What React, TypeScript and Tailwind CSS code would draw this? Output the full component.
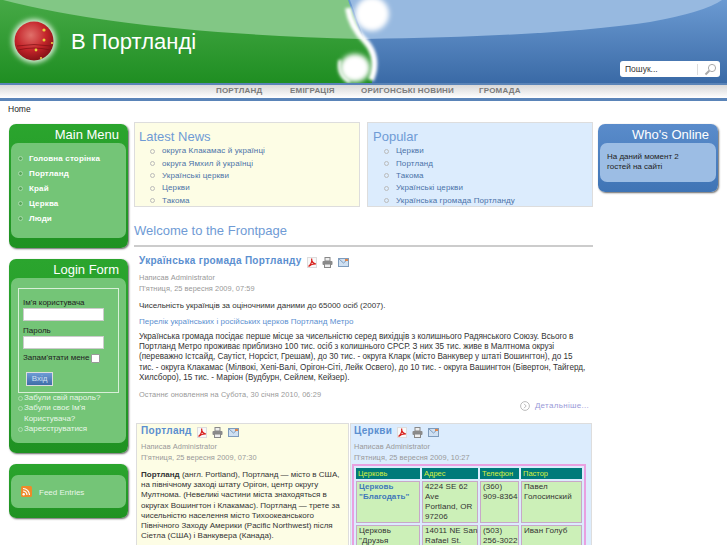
const sans = "font-['Liberation_Sans',Arial,sans-serif]";

const latest = ["округа Клакамас й українці", "округа Ямхил й українці", "Українські церкви", "Церкви", "Такома"];
const popular = ["Церкви", "Портланд", "Такома", "Українські церкви", "Українська громада Портланду"];
const menu = ["Головна сторінка", "Портланд", "Край", "Церква", "Люди"];
const nav = [
  { label: "ПОРТЛАНД", cls: "w-[74px]" },
  { label: "ЕМІГРАЦІЯ", cls: "w-[71px]" },
  { label: "ОРИГОНСЬКІ НОВИНИ", cls: "w-[118px]" },
  { label: "ГРОМАДА", cls: "w-[60px]" },
];

function HeaderArt() {
  return (
    <svg className="absolute inset-0" width="727" height="83" viewBox="0 0 727 83">
      <defs>
        <linearGradient id="g" x1="0" y1="0" x2="0" y2="1">
          <stop offset="0" stopColor="#46a946" />
          <stop offset="1" stopColor="#1f8e22" />
        </linearGradient>
        <linearGradient id="b" x1="0" y1="0" x2="0" y2="1">
          <stop offset="0" stopColor="#6b9ad2" />
          <stop offset="1" stopColor="#3a6aa6" />
        </linearGradient>
        <radialGradient id="ball" cx="0.42" cy="0.35" r="0.7">
          <stop offset="0" stopColor="#e0706a" />
          <stop offset="0.55" stopColor="#c4242a" />
          <stop offset="1" stopColor="#7d0f14" />
        </radialGradient>
        <filter id="soft" x="-40%" y="-40%" width="180%" height="180%">
          <feGaussianBlur stdDeviation="2.6" />
        </filter>
        <filter id="tail" x="-60%" y="-20%" width="220%" height="140%">
          <feGaussianBlur stdDeviation="1.6" />
        </filter>
      </defs>
      <rect width="727" height="83" fill="url(#b)" />
      <path d="M0 0L348 0C350 14 354 26 362 36C372 46 376 60 372 83L0 83Z" fill="url(#g)" />
      <path d="M3 0Q130 33 362 39L348 0Z" fill="#82c785" />
      <path d="M364 39Q560 36 650 22Q705 12 722 0L350 0Z" fill="#97b9e0" />
      <path d="M348 8C350 22 356 32 366 42C375 52 377 66 371 80" fill="none" stroke="#ffffff" strokeWidth="6" filter="url(#tail)" />
      <path d="M340 60C338 70 342 78 350 82" fill="none" stroke="#ffffff" strokeWidth="3" filter="url(#tail)" />
      <ellipse cx="372" cy="14" rx="17" ry="17" fill="#ffffff" filter="url(#soft)" />
      <ellipse cx="355" cy="68" rx="15" ry="14" fill="#ffffff" filter="url(#soft)" />
      <circle cx="34" cy="41" r="22" fill="#d8efd8" filter="url(#soft)" />
      <circle cx="34" cy="41" r="19.5" fill="url(#ball)" />
      <path d="M18 50Q34 46 50 50M17 46Q34 43 51 46" fill="none" stroke="#7d0f14" strokeWidth="1" opacity="0.7" />
      <g fill="#e8d040">
        <circle cx="44" cy="30" r="1.6" />
        <circle cx="44" cy="40" r="1.5" />
        <circle cx="36" cy="50" r="1.4" />
        <circle cx="52" cy="43" r="1.1" />
        <circle cx="41" cy="58" r="1.1" />
      </g>
    </svg>
  );
}

function Bullet({ cls }: { cls: string }) {
  return <span className={`w-[5px] h-[5px] rounded-full shrink-0 border ${cls}`} />;
}

function ArticleIcons() {
  return (
    <span className="inline-flex items-center gap-[5px] ml-[5px] mt-[4px]">
      <svg width="10" height="11" viewBox="0 0 10 11">
        <rect x="0.5" y="0.5" width="9" height="10" fill="#f8f8f8" stroke="#ddd" />
        <path d="M1.5 9.5C4 7.5 5 4 4.6 1.5C4.6 4 6 6.5 9 7C6.5 6.8 4 7.5 1.5 9.5Z" fill="none" stroke="#d8231f" strokeWidth="1.2" />
      </svg>
      <svg width="11" height="11" viewBox="0 0 11 11">
        <rect x="3" y="0.5" width="5" height="3.5" fill="#eee" stroke="#888" />
        <rect x="0.5" y="4" width="10" height="4" rx="1" fill="#8a8a8a" />
        <rect x="2.5" y="7" width="6" height="3.5" fill="#eee" stroke="#888" />
      </svg>
      <svg width="11" height="9" viewBox="0 0 11 9">
        <rect x="0.5" y="0.5" width="10" height="8" fill="#cfe0f2" stroke="#7f9cbc" />
        <path d="M1 1L5.5 5L10 1" fill="none" stroke="#7f9cbc" />
        <rect x="7" y="1" width="3" height="2" fill="#e0864a" />
      </svg>
    </span>
  );
}

function Meta({ date }: { date: string }) {
  return (
    <div className="text-[7.4px] text-[#999] tracking-[0.05px]">
      <div className="h-[11px] leading-[11px]">Написав Administrator</div>
      <div className="h-[11px] leading-[11px]">П'ятниця, 25 вересня 2009, {date}</div>
    </div>
  );
}

function Module({ title, color, inner, height, titleH, children }: { title?: string; color: string; inner: string; height: string; titleH: string; children: React.ReactNode }) {
  return (
    <div className={`rounded-[7px] px-[2px] pt-[2px] pb-[10px] shadow-[1px_1px_2px_#666] bg-gradient-to-b ${color}`}>
      <div className={`${titleH} text-right pr-[7px] text-[13px] leading-[17px] text-white`}>{title}</div>
      <div className={`rounded-[7px] ${inner} ${height}`}>{children}</div>
    </div>
  );
}

function NewsBox({ title, items, bg, pad }: { title: string; items: string[]; bg: string; pad: string }) {
  return (
    <div className={`w-[226px] h-[85px] border border-[#ddd] pt-[6px] ${pad} ${bg}`}>
      <div className="text-[13px] leading-[16px] text-[#6f9bd5]">{title}</div>
      <ul>
        {items.map((t) => (
          <li key={t} className="flex items-center h-[12.4px] text-[8px] tracking-[0.12px] text-[#4a72a8] pl-[11px] gap-[7px]">
            <Bullet cls="border-[#bbb]" />
            {t}
          </li>
        ))}
      </ul>
    </div>
  );
}

const th = "bg-[#007a7a] text-[#d6f03c] text-[7.5px] font-normal text-left px-[2px] h-[11px] align-middle";
const td = "bg-[#ccf0b8] border border-[#c8a8c8] align-top px-[2px] text-[8px] tracking-[0.1px] leading-[10px] whitespace-nowrap";

export default function App() {
  return (
    <div className={`${sans} w-[727px] h-[545px] overflow-hidden bg-white text-[#333]`}>
      <header className="relative h-[83px]">
        <HeaderArt />
        <div className="relative flex items-center h-[82px] pl-[71px] pt-px text-[22px] text-white">В Портланді</div>
        <div className="absolute right-[7px] top-[61px] w-[100px] h-[16px] bg-white rounded-[3px] flex items-center pl-[5px] pr-[3px] text-[8.5px] text-[#333]">
          <span className="flex-1">Пошук...</span>
          <span className="w-px h-[11px] bg-[#ddd] mr-[6px]" />
          <svg width="13" height="13" viewBox="0 0 13 13" fill="none" stroke="#aaa">
            <circle cx="8" cy="5" r="3.6" strokeWidth="1" />
            <path d="M5.3 7.7L1.5 11.5" strokeWidth="2" />
          </svg>
        </div>
      </header>

      <nav className="h-[18px] border-t-2 border-b-[3px] border-[#5a84b8] bg-gradient-to-b from-[#d8d8d8] to-white flex pl-[216px] pb-[2px] items-center">
        {nav.map((n) => (
          <span key={n.label} className={`${n.cls} text-[8px] font-bold tracking-[0.2px] text-[#7b7b7b]`}>{n.label}</span>
        ))}
      </nav>

      <div className="h-[21px] pl-[8px] pt-[3px] text-[8.5px] leading-[11px] text-[#222]">Home</div>

      <div className="flex pl-[9px] items-start">
        <aside className="w-[119px] flex flex-col gap-[11px] mt-[2px]">
          <Module title="Main Menu" color="from-[#2ba52e] to-[#1f9222]" inner="bg-[#74c577]" height="h-[95px]" titleH="h-[17px]">
            <ul className="pt-[8px]">
              {menu.map((m) => (
                <li key={m} className="flex items-center h-[15px] pl-[7px] gap-[6px] text-[8px] font-bold tracking-[0.15px] text-white">
                  <Bullet cls="border-[#a9dcab] bg-[#5aa85c]" />
                  {m}
                </li>
              ))}
            </ul>
          </Module>

          <Module title="Login Form" color="from-[#2ba52e] to-[#1f9222]" inner="bg-[#74c577]" height="h-[165px]" titleH="h-[17px]">
            <div className="pt-[10px] pl-[7px]">
              <div className="w-[101px] h-[105px] border border-[#d8efd8] pl-[4px] pt-[8px] text-[8px] text-[#222]">
                <div className="h-[11px] leading-[11px]">Ім'я користувача</div>
                <div className="w-[81px] h-[13px] bg-white border border-[#ccc]" />
                <div className="h-[11px] leading-[11px] mt-[4px]">Пароль</div>
                <div className="w-[81px] h-[13px] bg-white border border-[#ccc]" />
                <div className="flex items-center mt-[3px] h-[12px] gap-[2px]">
                  Запам'ятати мене
                  <span className="w-[9px] h-[9px] bg-white border border-[#999] rounded-[1px]" />
                </div>
                <div className="mt-[8px] ml-[3px] w-[27px] h-[14px] bg-gradient-to-b from-[#6f9bd5] to-[#3f6da8] border border-[#ddd] text-[8px] leading-[12px] text-center text-[#cfe0f2]">Вхід</div>
              </div>
              <ul className="text-[8px] leading-[10.4px] text-[#e8f6e8]">
                <li className="flex items-center gap-[1px]"><Bullet cls="border-[#a9dcab]" />Забули свій пароль?</li>
                <li className="flex items-center gap-[1px]"><Bullet cls="border-[#a9dcab]" />Забули своє Ім'я</li>
                <li className="pl-[6px]">Користувача?</li>
                <li className="flex items-center gap-[1px]"><Bullet cls="border-[#a9dcab]" />Зареєструватися</li>
              </ul>
            </div>
          </Module>

          <Module color="from-[#2ba52e] to-[#1f9222]" inner="bg-[#74c577]" height="h-[33px]" titleH="h-[9px]">
            <div className="flex items-center h-[33px] pl-[10px] gap-[7px] text-[8px] text-[#e8f6e8]">
              <svg width="11" height="11" viewBox="0 0 11 11">
                <rect width="11" height="11" rx="1.5" fill="#ee8a2a" />
                <circle cx="2.7" cy="8.3" r="1.2" fill="#fff" />
                <path d="M2 5A4 4 0 0 1 6 9M2 2.5A6.5 6.5 0 0 1 8.5 9" fill="none" stroke="#fff" strokeWidth="1.2" />
              </svg>
              <span className="mt-[3px]">Feed Entries</span>
            </div>
          </Module>
        </aside>

        <main className="w-[459px] ml-[6px]">
          <div className="flex justify-between">
            <NewsBox title="Latest News" items={latest} bg="bg-[#fdfde5]" pad="pl-[4px]" />
            <NewsBox title="Popular" items={popular} bg="bg-[#dcecfd]" pad="pl-[5px]" />
          </div>

          <h1 className="h-[40px] pt-[16px] border-b-2 border-[#ccc] text-[13px] leading-[16px] text-[#6f9bd5]">Welcome to the Frontpage</h1>

          <article className="pl-[5px] pr-[4px] pt-[6px] h-[176px]">
            <h2 className="flex items-center h-[14px] text-[10px] font-bold tracking-[0.3px] text-[#5b8fd0]">
              Українська громада Портланду
              <ArticleIcons />
            </h2>
            <div className="mt-[5px]"><Meta date="07:59" /></div>
            <p className="mt-[6px] text-[8px] leading-[11px]">Чисельність українців за оціночними даними до 65000 осіб (2007).</p>
            <p className="mt-[5px] text-[8px] leading-[11px] tracking-[0.05px] text-[#5b8fd0]">Перелік українських і російських церков Портланд Метро</p>
            <p className="mt-[5px] text-[8.15px] leading-[10.2px]">
              Українська громада посідає перше місце за чисельністю серед вихідців з колишнього Радянського Союзу. Всього в Портланд Метро проживає приблизно 100 тис. осіб з колишнього СРСР. З них 35 тис. живе в Малтнома окрузі (переважно Істсайд, Саутіст, Норсіст, Грешам), до 30 тис. - округа Кларк (місто Ванкувер у штаті Вошингтон), до 15 тис. - округа Клакамас (Мілвокі, Хепі-Валі, Орігон-Сіті, Лейк Освего), до 10 тис. - округа Вашингтон (Бівертон, Тайгерд, Хилсборо), 15 тис. - Маріон (Вудбурн, Сейлем, Кейзер).
            </p>
            <div className="mt-[6px] text-[7.4px] leading-[11px] text-[#999] tracking-[0.1px]">Останнє оновлення на Субота, 30 січня 2010, 06:29</div>
            <div className="flex justify-end items-center gap-[5px] text-[8px] tracking-[0.3px] text-[#9a9ad8]">
              <svg width="10" height="10" viewBox="0 0 10 10" fill="none" stroke="#bbb">
                <circle cx="5" cy="5" r="4.4" />
                <path d="M4 2.8L6.2 5L4 7.2" />
              </svg>
              Детальніше...
            </div>
          </article>

          <div className="flex ml-[2px] gap-px h-[140px]">
            <section className="w-[213px] h-full bg-[#fdfde5] border border-[#ddd] pl-[4px] pr-[2px]">
              <h2 className="flex items-center h-[14px] mt-[-1px] text-[10px] font-bold tracking-[0.3px] text-[#5b8fd0]">
                Портланд
                <ArticleIcons />
              </h2>
              <div className="mt-[4px]"><Meta date="07:30" /></div>
              <p className="mt-[7px] text-[8px] leading-[10.2px]">
                <b>Портланд</b> (англ. Portland), Портланд — місто в США, на північному заході штату Орігон, центр округу Мултнома. (Невеликі частини міста знаходяться в округах Вошингтон і Клакамас). Портланд — трете за чисельністю населення місто Тихоокеанського Північного Заходу Америки (Pacific Northwest) після Сіетла (США) і Ванкувера (Канада).
              </p>
            </section>
            <section className="w-[242px] h-full bg-[#dcecfd] border border-[#ddd] pl-px">
              <h2 className="flex items-center h-[14px] mt-[-1px] ml-[2px] text-[10px] font-bold tracking-[0.3px] text-[#5b8fd0]">
                Церкви
                <ArticleIcons />
              </h2>
              <div className="mt-[4px] ml-[2px]"><Meta date="10:27" /></div>
              <table className="mt-[1px] w-[234px] border-2 border-[#e9a0e0] border-separate border-spacing-[2px] table-fixed">
                <thead>
                  <tr>
                    <th className={`${th} w-[64px]`}>Церковь</th>
                    <th className={`${th} w-[56px]`}>Адрес</th>
                    <th className={`${th} w-[39px]`}>Телефон</th>
                    <th className={th}>Пастор</th>
                  </tr>
                </thead>
                <tbody>
                  <tr>
                    <td className={`${td} font-bold text-[#3f78b8]`}>Церковь<br />"Благодать"</td>
                    <td className={`${td} text-[8.5px]`}>4224 SE 62<br />Ave<br />Portland, OR<br />97206</td>
                    <td className={td}>(360)<br />909-8364</td>
                    <td className={td}>Павел<br />Голосинский</td>
                  </tr>
                  <tr>
                    <td className={td}>Церковь<br />"Друзья</td>
                    <td className={`${td} text-[8.5px]`}>14011 NE San<br />Rafael St.</td>
                    <td className={td}>(503)<br />256-3022</td>
                    <td className={td}>Иван Голуб</td>
                  </tr>
                </tbody>
              </table>
            </section>
          </div>
        </main>

        <aside className="w-[120px] ml-[5px] mt-[2px]">
          <Module title="Who's Online" color="from-[#5a8ccb] to-[#3f74b5]" inner="bg-[#9cbde4]" height="h-[39px]" titleH="h-[17px]">
            <div className="pl-[7px] pt-[9px] text-[8px] leading-[10px] text-[#222]">На даний момент 2<br />гостей на сайті</div>
          </Module>
        </aside>
      </div>
    </div>
  );
}
